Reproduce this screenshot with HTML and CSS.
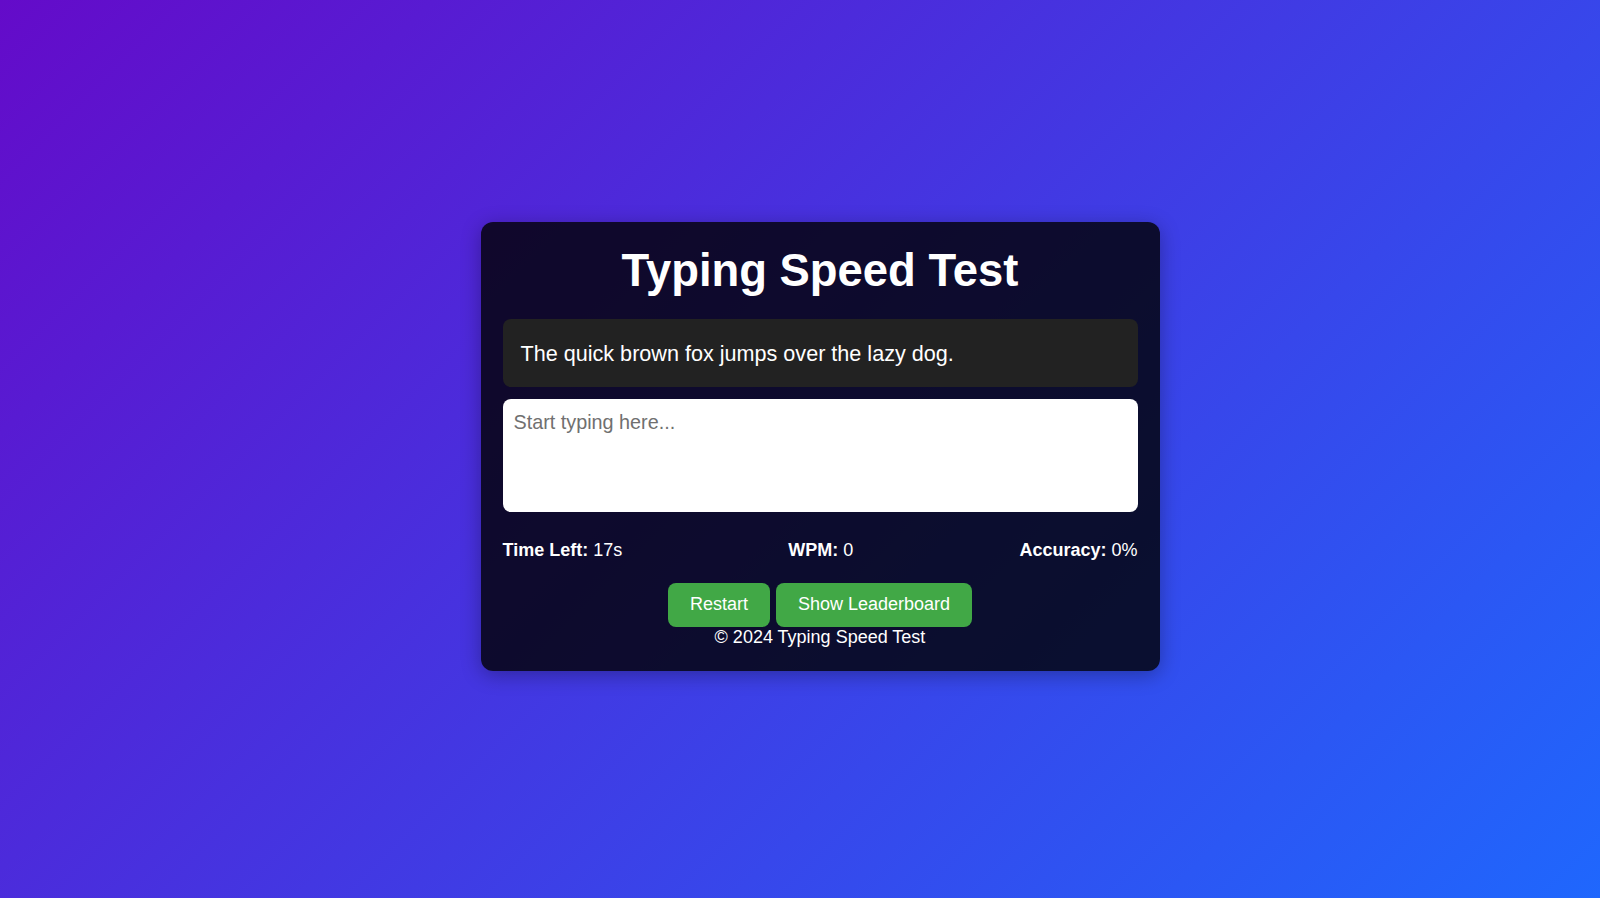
FILE: index.html
```html
<!DOCTYPE html>
<html lang="en">
<head>
<meta charset="utf-8">
<title>Typing Speed Test</title>
<link rel="stylesheet" href="styles.css">
</head>
<body>
  <main class="card">
    <h1 class="title">Typing Speed Test</h1>
    <div class="sentence">The quick brown fox jumps over the lazy dog.</div>
    <textarea class="input" placeholder="Start typing here..."></textarea>
    <div class="stats">
      <div class="stat"><b>Time Left:</b> 17s</div>
      <div class="stat"><b>WPM:</b> 0</div>
      <div class="stat"><b>Accuracy:</b> 0%</div>
    </div>
    <div class="actions">
      <button class="btn">Restart</button>
      <button class="btn">Show Leaderboard</button>
    </div>
    <footer class="footer">© 2024 Typing Speed Test</footer>
  </main>
</body>
</html>
```

FILE: styles.css
```css
html, body {
  margin: 0;
  height: 100%;
}
body {
  box-sizing: border-box;
  min-height: 100vh;
  padding: 0 0 6px 40px;
  display: flex;
  align-items: center;
  justify-content: center;
  font-family: "Liberation Sans", Arial, sans-serif;
  font-size: 18px;
  color: #fff;
  background: linear-gradient(135deg, #640bc9 0%, #1f67fd 100%);
}
.card {
  box-sizing: border-box;
  width: 679px;
  padding: 20px 22px 24px;
  background: rgba(0, 0, 0, 0.8);
  border-radius: 12px;
  box-shadow: 0 4px 20px rgba(0, 0, 0, 0.3);
  text-align: center;
}
.title {
  margin: 3px 0 22px;
  font-size: 45.4px;
  font-weight: bold;
  line-height: normal;
}
.sentence {
  background: #222;
  border-radius: 8px;
  padding: 21px 18px 19px;
  font-size: 21.6px;
  line-height: 28px;
  text-align: left;
}
.input {
  display: block;
  box-sizing: border-box;
  width: 100%;
  height: 113px;
  margin-top: 12px;
  padding: 12px 11px 10px;
  border: none;
  border-radius: 8px;
  background: #fff;
  font-family: "Liberation Sans", Arial, sans-serif;
  font-size: 19.8px;
  resize: none;
  outline: none;
}
.input::placeholder {
  color: #707070;
}
.stats {
  display: flex;
  justify-content: space-between;
  margin-top: 28px;
  line-height: 20px;
}
.actions {
  display: flex;
  justify-content: center;
  gap: 6px;
  margin-top: 23px;
}
.btn {
  height: 44px;
  padding: 0 22px;
  border: none;
  border-radius: 8px;
  background: #41a846;
  color: #fff;
  font-family: "Liberation Sans", Arial, sans-serif;
  font-size: 18px;
  cursor: pointer;
}
.footer {
  line-height: 20px;
}
```
